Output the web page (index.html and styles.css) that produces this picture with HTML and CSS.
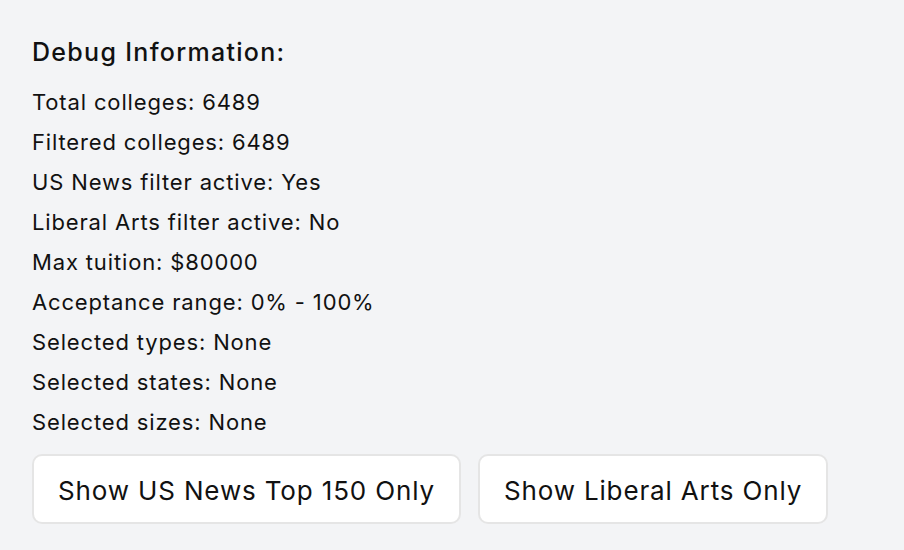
FILE: index.html
```html
<!DOCTYPE html>
<html>
<head>
<meta charset="utf-8">
<link rel="stylesheet" href="styles.css">
</head>
<body>
<div class="panel">
  <h3 class="title">Debug Information:</h3>
  <div class="lines">
    <p>Total colleges: 6489</p>
    <p>Filtered colleges: 6489</p>
    <p>US News filter active: Yes</p>
    <p>Liberal Arts filter active: No</p>
    <p>Max tuition: $80000</p>
    <p>Acceptance range: 0% - 100%</p>
    <p>Selected types: None</p>
    <p>Selected states: None</p>
    <p>Selected sizes: None</p>
  </div>
  <div class="actions">
    <button class="btn">Show US News Top 150 Only</button>
    <button class="btn">Show Liberal Arts Only</button>
  </div>
</div>
</body>
</html>
```
FILE: styles.css
```css
html, body {
  margin: 0;
  padding: 0;
  background: #f3f4f6;
}
body {
  font-family: Inter, "Noto Sans", sans-serif;
  color: #111;
}
.panel {
  padding: 36px 32px 0 32px;
}
.title {
  margin: 0 0 14px 0;
  font-size: 25px;
  font-weight: 500;
  letter-spacing: 1.3px;
  line-height: 32px;
}
.lines p {
  margin: 0;
  font-size: 22px;
  letter-spacing: 0.85px;
  line-height: 40px;
}
.actions {
  display: flex;
  gap: 17px;
  margin-top: 12px;
}
.btn {
  font-family: inherit;
  font-size: 26px;
  letter-spacing: 0.85px;
  color: #111;
  background: #fff;
  border: 2px solid #e5e5e5;
  border-radius: 10px;
  height: 70px;
  padding: 2px 24px 0 24px;
}
```
